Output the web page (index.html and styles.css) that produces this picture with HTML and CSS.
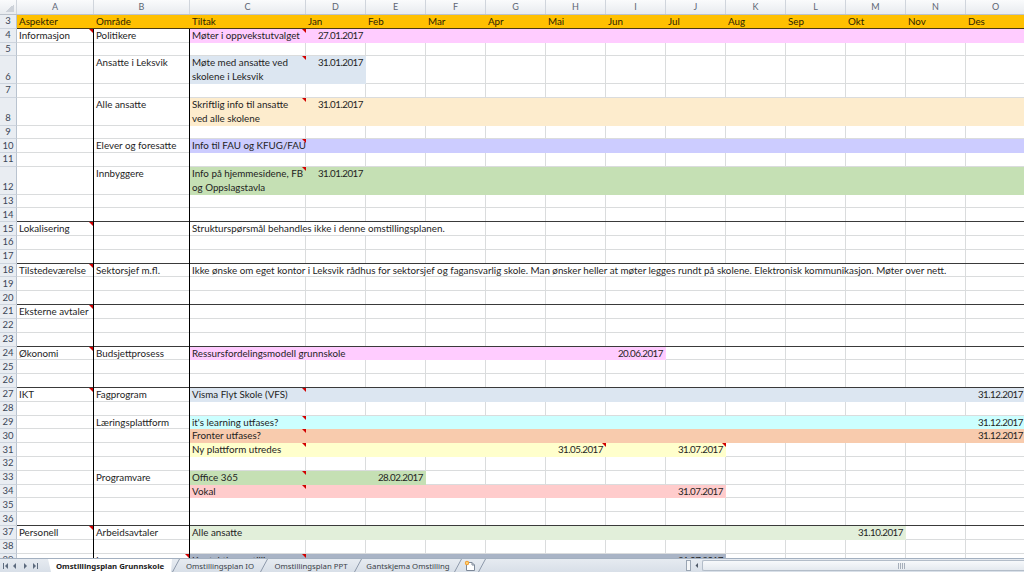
FILE: index.html
```html
<!DOCTYPE html>
<html lang="no">
<head>
<meta charset="utf-8">
<title>Omstillingsplan Grunnskole</title>
<link rel="stylesheet" href="styles.css">
</head>
<body>
<div class="app">
  <div class="colhdr">
    <div class="corner"></div><div>A</div><div>B</div><div>C</div><div>D</div><div>E</div><div>F</div><div>G</div><div>H</div><div>I</div><div>J</div><div>K</div><div>L</div><div>M</div><div>N</div><div>O</div>
  </div>
  <div class="sheet">
    <div class="r hd"><div class="n">3</div><div class="tx xA">Aspekter</div><div class="tx xB">Område</div><div class="tx xC">Tiltak</div><div class="tx xD">Jan</div><div class="tx xE">Feb</div><div class="tx xF">Mar</div><div class="tx xG">Apr</div><div class="tx xH">Mai</div><div class="tx xI">Jun</div><div class="tx xJ">Jul</div><div class="tx xK">Aug</div><div class="tx xL">Sep</div><div class="tx xM">Okt</div><div class="tx xN">Nov</div><div class="tx xO">Des</div></div>

    <div class="r"><div class="n">4</div><div class="a tx cm">Informasjon</div><div class="b tx">Politikere</div><div class="f pink cO"></div><div class="tx xC cm">Møter i oppvekstutvalget</div><div class="tx dt xD">27.01.2017</div></div>
    <div class="r"><div class="n">5</div><div class="a"></div><div class="b"></div></div>
    <div class="r t"><div class="n">6</div><div class="a"></div><div class="b tx">Ansatte i Leksvik</div><div class="f blue cD"></div><div class="tx xC cm">Møte med ansatte ved<br>skolene i Leksvik</div><div class="tx dt xD">31.01.2017</div></div>
    <div class="r"><div class="n">7</div><div class="a"></div><div class="b"></div></div>
    <div class="r t"><div class="n">8</div><div class="a"></div><div class="b tx">Alle ansatte</div><div class="f peach cO"></div><div class="tx xC cm">Skriftlig info til ansatte<br>ved alle skolene</div><div class="tx dt xD">31.01.2017</div></div>
    <div class="r"><div class="n">9</div><div class="a"></div><div class="b"></div></div>
    <div class="r"><div class="n">10</div><div class="a"></div><div class="b tx">Elever og foresatte</div><div class="f lav cO"></div><div class="tx xC cm">Info til FAU og KFUG/FAU</div></div>
    <div class="r"><div class="n">11</div><div class="a"></div><div class="b"></div></div>
    <div class="r t"><div class="n">12</div><div class="a"></div><div class="b tx">Innbyggere</div><div class="f green cO"></div><div class="tx xC cm">Info på hjemmesidene, FB<br>og Oppslagstavla</div><div class="tx dt xD">31.01.2017</div></div>
    <div class="r"><div class="n">13</div><div class="a"></div><div class="b"></div></div>
    <div class="r gb"><div class="n">14</div><div class="a"></div><div class="b"></div></div>

    <div class="r"><div class="n">15</div><div class="a tx cm">Lokalisering</div><div class="b"></div><div class="tx ov oF">Strukturspørsmål behandles ikke i denne omstillingsplanen.</div></div>
    <div class="r"><div class="n">16</div><div class="a"></div><div class="b"></div></div>
    <div class="r gb"><div class="n">17</div><div class="a"></div><div class="b"></div></div>

    <div class="r"><div class="n">18</div><div class="a tx cm">Tilstedeværelse</div><div class="b tx">Sektorsjef m.fl.</div><div class="tx ov oN">Ikke ønske om eget kontor i Leksvik rådhus for sektorsjef og fagansvarlig skole. Man ønsker heller at møter legges rundt på skolene. Elektronisk kommunikasjon. Møter over nett.</div></div>
    <div class="r"><div class="n">19</div><div class="a"></div><div class="b"></div></div>
    <div class="r gb"><div class="n">20</div><div class="a"></div><div class="b"></div></div>

    <div class="r"><div class="n">21</div><div class="a tx cm">Eksterne avtaler</div><div class="b"></div></div>
    <div class="r"><div class="n">22</div><div class="a"></div><div class="b"></div></div>
    <div class="r gb"><div class="n">23</div><div class="a"></div><div class="b"></div></div>

    <div class="r"><div class="n">24</div><div class="a tx cm">Økonomi</div><div class="b tx">Budsjettprosess</div><div class="f pink cI"></div><div class="tx xC">Ressursfordelingsmodell grunnskole</div><div class="tx dt xI">20.06.2017</div></div>
    <div class="r"><div class="n">25</div><div class="a"></div><div class="b"></div></div>
    <div class="r gb"><div class="n">26</div><div class="a"></div><div class="b"></div></div>

    <div class="r"><div class="n">27</div><div class="a tx cm">IKT</div><div class="b tx">Fagprogram</div><div class="f blue cO"></div><div class="tx xC cm">Visma Flyt Skole (VFS)</div><div class="tx dt xO">31.12.2017</div></div>
    <div class="r"><div class="n">28</div><div class="a"></div><div class="b"></div></div>
    <div class="r"><div class="n">29</div><div class="a"></div><div class="b tx">Læringsplattform</div><div class="f cyan cO"></div><div class="tx xC cm">it's learning utfases?</div><div class="tx dt xO">31.12.2017</div></div>
    <div class="r"><div class="n">30</div><div class="a"></div><div class="b"></div><div class="f salmon cO"></div><div class="tx xC cm">Fronter utfases?</div><div class="tx dt xO">31.12.2017</div></div>
    <div class="r"><div class="n">31</div><div class="a"></div><div class="b"></div><div class="f yellow cJ"></div><div class="tx xC cm">Ny plattform utredes</div><div class="tx dt xH cm">31.05.2017</div><div class="tx dt xJ cm">31.07.2017</div></div>
    <div class="r"><div class="n">32</div><div class="a"></div><div class="b"></div></div>
    <div class="r"><div class="n">33</div><div class="a"></div><div class="b tx">Programvare</div><div class="f green cE"></div><div class="tx xC cm">Office 365</div><div class="tx dt xE">28.02.2017</div></div>
    <div class="r"><div class="n">34</div><div class="a"></div><div class="b"></div><div class="f red cJ"></div><div class="tx xC cm">Vokal</div><div class="tx dt xJ">31.07.2017</div></div>
    <div class="r"><div class="n">35</div><div class="a"></div><div class="b"></div></div>
    <div class="r gb"><div class="n">36</div><div class="a"></div><div class="b"></div></div>

    <div class="r"><div class="n">37</div><div class="a tx cm">Personell</div><div class="b tx">Arbeidsavtaler</div><div class="f lgreen cM"></div><div class="tx xC">Alle ansatte</div><div class="tx dt xM">31.10.2017</div></div>
    <div class="r"><div class="n">38</div><div class="a"></div><div class="b"></div></div>
    <div class="r"><div class="n">39</div><div class="a"></div><div class="b tx cm">Lønn</div><div class="f slate cJ"></div><div class="tx xC cm">Kontaktlærerstilling</div><div class="tx dt xJ">31.07.2017</div></div>
  </div>

  <div class="tabs">
    <div class="nav">
      <svg width="44" height="12" viewBox="0 0 44 12">
        <g fill="#5d6b7e">
          <rect x="3" y="3" width="1" height="6"/>
          <path d="M8 3 L5 6 L8 9 Z"/>
          <path d="M16 3 L13 6 L16 9 Z"/>
          <path d="M24 3 L27 6 L24 9 Z"/>
          <path d="M33 3 L36 6 L33 9 Z"/>
          <rect x="37" y="3" width="1" height="6"/>
        </g>
      </svg>
    </div>
    <div class="tab on w1">Omstillingsplan Grunnskole</div>
    <svg class="sep" width="8" height="13" viewBox="0 0 8 13"><path d="M0.5 13 L7.5 0" stroke="#8d99aa" fill="none"/></svg>
    <div class="tab w2">Omstillingsplan IO</div>
    <svg class="sep" width="8" height="13" viewBox="0 0 8 13"><path d="M0.5 13 L7.5 0" stroke="#8d99aa" fill="none"/></svg>
    <div class="tab w3">Omstillingsplan PPT</div>
    <svg class="sep" width="8" height="13" viewBox="0 0 8 13"><path d="M0.5 13 L7.5 0" stroke="#8d99aa" fill="none"/></svg>
    <div class="tab w4">Gantskjema Omstilling</div>
    <svg class="sep" width="8" height="13" viewBox="0 0 8 13"><path d="M0.5 13 L7.5 0" stroke="#8d99aa" fill="none"/></svg>
    <div class="newsheet">
      <svg width="14" height="12" viewBox="0 0 14 12">
        <path d="M3.5 2.5 H9 L11.5 5 V10.5 H3.5 Z" fill="#fff" stroke="#7d8898"/>
        <path d="M9 2.5 V5 H11.5" fill="none" stroke="#7d8898"/>
        <circle cx="4" cy="3" r="2.2" fill="#f2a33a"/>
        <circle cx="4" cy="3" r="1" fill="#ffe08a"/>
      </svg>
    </div>
    <svg class="sep" width="8" height="13" viewBox="0 0 8 13"><path d="M0.5 13 L7.5 0" stroke="#8d99aa" fill="none"/></svg>
    <div class="spacer"></div>
    <div class="split"></div>
    <div class="sbl">
      <svg width="8" height="11" viewBox="0 0 8 11"><path d="M5 3 L2.5 5.5 L5 8 Z" fill="#4d5867"/></svg>
    </div>
    <div class="thumb"><span class="grip"></span></div>
  </div>
</div>
</body>
</html>
```

FILE: styles.css
```css
* { box-sizing: border-box; margin: 0; padding: 0; }
html, body { width: 1024px; height: 572px; overflow: hidden; background: #fff; }
body { font-family: Lato, "Liberation Sans", sans-serif; font-size: 9.8px; color: #1e1e1e; }

.app { display: flex; flex-direction: column; width: 1024px; height: 572px; overflow: hidden; }

/* column letters */
.colhdr {
  flex: 0 0 15px;
  display: grid;
  grid-template-columns: 17px 77px 96px 116px repeat(12, 60px);
  background: linear-gradient(#fafbfc, #e8ebef);
  border-bottom: 1px solid #bcc3cc;
}
.colhdr > div {
  border-right: 1px solid #d0d5dc;
  text-align: center;
  color: #5c6573;
  font-size: 9px;
  line-height: 14px;
}
.colhdr .corner {
  background: linear-gradient(135deg, transparent 50%, #cdd2d9 50%) right 2px bottom 2px / 8px 8px no-repeat;
}

/* sheet rows */
.sheet { flex: 1 1 0; min-height: 0; overflow: hidden; }
.r {
  display: grid;
  grid-template-columns: 17px 77px 96px 116px repeat(12, 60px);
  height: 13.82px;
  line-height: 13.82px;
  background-image:
    linear-gradient(0deg, #dadcdd 0 1px, transparent 1px),
    repeating-linear-gradient(90deg, transparent 0 59px, #dadcdd 59px 60px);
  background-repeat: no-repeat;
  background-position: 0 0, 246px 0;
  background-size: 100% 100%, 780px 100%;
}
.r.t { height: 27.64px; }
.r.gb {
  background-image:
    linear-gradient(0deg, #3a3a3a 0 1px, transparent 1px),
    repeating-linear-gradient(90deg, transparent 0 59px, #dadcdd 59px 60px);
}
.r.hd {
  background: linear-gradient(0deg, #4a3a12 0 1px, #ffc000 1px);
  color: #2e2400;
}
.r > * { grid-row: 1; min-width: 0; }

.n {
  grid-column: 1;
  display: flex;
  align-items: flex-end;
  justify-content: center;
  background: #e9edf2;
  border-right: 1px solid #b9c3cf;
  border-bottom: 1px solid #cdd4dd;
  color: #3b4657;
  font-size: 9.5px;
  line-height: 12.5px;
}
.a { grid-column: 2; border-right: 1px solid #000; position: relative; }
.b { grid-column: 3; border-right: 1px solid #000; position: relative; }

.tx { padding: 0 2px; white-space: nowrap; position: relative; }
.dt { text-align: right; padding-right: 3px; letter-spacing: -0.5px; }

.xA { grid-column: 2; } .xB { grid-column: 3; } .xC { grid-column: 4; }
.xD { grid-column: 5; } .xE { grid-column: 6; } .xF { grid-column: 7; }
.xG { grid-column: 8; } .xH { grid-column: 9; } .xI { grid-column: 10; }
.xJ { grid-column: 11; } .xK { grid-column: 12; } .xL { grid-column: 13; }
.xM { grid-column: 14; } .xN { grid-column: 15; } .xO { grid-column: 16; }

.cD { grid-column: 4 / 6; } .cE { grid-column: 4 / 7; } .cI { grid-column: 4 / 11; }
.cJ { grid-column: 4 / 12; } .cM { grid-column: 4 / 15; } .cO { grid-column: 4 / 17; }
.oF { grid-column: 4 / 8; } .oN { grid-column: 4 / 16; }

.ov {
  background: linear-gradient(#fff, #fff) no-repeat 0 0 / calc(100% - 1px) calc(100% - 1px);
}

.pink { background: #ffccff; }
.blue { background: #dce6f1; }
.peach { background: #fdeccd; }
.lav { background: #ccccff; }
.green { background: #c5e0b4; }
.cyan { background: #ccffff; }
.salmon { background: #f8cbad; }
.yellow { background: #ffffcc; }
.red { background: #ffcccc; }
.lgreen { background: #e2efda; }
.slate { background: #a9b4c6; }

.cm::after {
  content: "";
  position: absolute;
  top: 0;
  right: 0;
  width: 0;
  height: 0;
  border-top: 4px solid #d10000;
  border-left: 4px solid transparent;
}

/* sheet tabs bar */
.tabs {
  flex: 0 0 13px;
  display: flex;
  align-items: stretch;
  background: linear-gradient(#e6ebf1, #d8dfe8);
  border-top: 1px solid #a3b0c0;
  font-family: "Noto Sans", "DejaVu Sans", sans-serif;
  font-size: 7.8px;
  color: #3a3f47;
  line-height: 12px;
}
.nav { width: 48px; display: flex; align-items: center; }
.tab { display: flex; align-items: center; justify-content: center; white-space: nowrap; }
.tab.on {
  background: #fff;
  font-weight: bold;
  color: #222;
  clip-path: polygon(0 0, 100% 0, calc(100% - 1px) 100%, 3px 100%);
}
.w1 { width: 124px; }
.w2 { width: 80px; }
.w3 { width: 86px; }
.w4 { width: 92px; }
.sep { flex: 0 0 8px; display: block; }
.newsheet { width: 16px; display: flex; align-items: center; justify-content: center; }
.spacer { flex: 1 1 auto; }
.split {
  width: 5px;
  margin: 1px 1px 1px 0;
  border: 1px solid #9aa5b3;
  background: #f4f6f8;
}
.sbl { width: 10px; display: flex; align-items: center; justify-content: center; }
.thumb {
  flex: 0 0 322px;
  margin: 1px 0;
  border: 1px solid #b3bdc9;
  border-right: 0;
  border-radius: 2px 0 0 2px;
  background: linear-gradient(#f7f9fb, #e4e9ef);
  display: flex;
  align-items: center;
  padding-left: 195px;
}
.grip {
  width: 7px;
  height: 6px;
  background: repeating-linear-gradient(90deg, #a6afbb 0 1px, #eef1f4 1px 2px);
}
```
